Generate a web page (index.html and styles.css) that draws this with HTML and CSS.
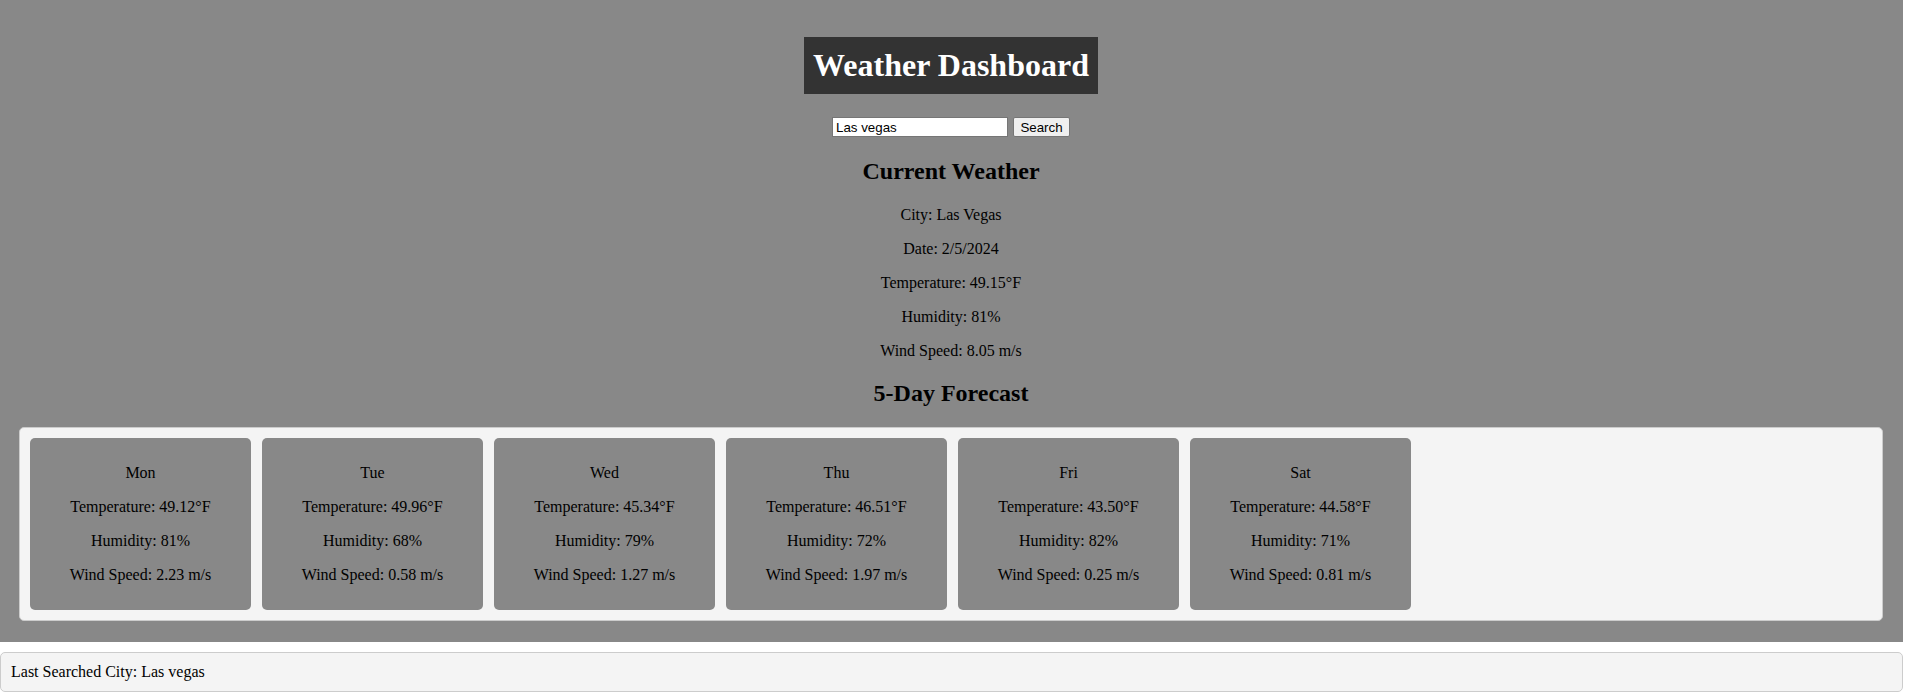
FILE: index.html
```html
<!DOCTYPE html>
<html lang="en">
<head>
<meta charset="UTF-8">
<title>Weather Dashboard</title>
<link rel="stylesheet" href="styles.css">
</head>
<body>
<main class="dashboard">
  <header class="title-wrap">
    <h1 class="title">Weather Dashboard</h1>
  </header>
  <form class="search">
    <input class="search-input" type="text" value="Las vegas">
    <button class="search-btn" type="button">Search</button>
  </form>
  <section class="current">
    <h2 class="section-title">Current Weather</h2>
    <p class="line">City: Las Vegas</p>
    <p class="line">Date: 2/5/2024</p>
    <p class="line">Temperature: 49.15°F</p>
    <p class="line">Humidity: 81%</p>
    <p class="line">Wind Speed: 8.05 m/s</p>
  </section>
  <h2 class="section-title">5-Day Forecast</h2>
  <div class="forecast">
    <div class="card">
      <p class="line">Mon</p>
      <p class="line">Temperature: 49.12°F</p>
      <p class="line">Humidity: 81%</p>
      <p class="line">Wind Speed: 2.23 m/s</p>
    </div>
    <div class="card">
      <p class="line">Tue</p>
      <p class="line">Temperature: 49.96°F</p>
      <p class="line">Humidity: 68%</p>
      <p class="line">Wind Speed: 0.58 m/s</p>
    </div>
    <div class="card">
      <p class="line">Wed</p>
      <p class="line">Temperature: 45.34°F</p>
      <p class="line">Humidity: 79%</p>
      <p class="line">Wind Speed: 1.27 m/s</p>
    </div>
    <div class="card">
      <p class="line">Thu</p>
      <p class="line">Temperature: 46.51°F</p>
      <p class="line">Humidity: 72%</p>
      <p class="line">Wind Speed: 1.97 m/s</p>
    </div>
    <div class="card">
      <p class="line">Fri</p>
      <p class="line">Temperature: 43.50°F</p>
      <p class="line">Humidity: 82%</p>
      <p class="line">Wind Speed: 0.25 m/s</p>
    </div>
    <div class="card">
      <p class="line">Sat</p>
      <p class="line">Temperature: 44.58°F</p>
      <p class="line">Humidity: 71%</p>
      <p class="line">Wind Speed: 0.81 m/s</p>
    </div>
  </div>
</main>
<div class="last-search">Last Searched City: Las vegas</div>
</body>
</html>
```

FILE: styles.css
```css
html, body {
  background: #ffffff;
}
body {
  margin: 0 5px 0 0;
  font-family: "Liberation Serif", "Times New Roman", serif;
  font-size: 16px;
  color: #000;
}
.dashboard {
  background: #888888;
  padding: 37px 20px 21px 19px;
  text-align: center;
}
.title-wrap {
  margin: 0;
}
.title {
  display: inline-block;
  margin: 0;
  padding: 10px 9px;
  background: #333333;
  color: #ffffff;
  font-size: 32px;
  line-height: 37px;
  font-weight: bold;
}
.search {
  display: flex;
  justify-content: center;
  align-items: center;
  gap: 5px;
  margin: 23px 0 0;
}
.search-input {
  box-sizing: border-box;
  width: 176px;
  height: 20px;
  padding: 1px 3px;
  border: 1px solid #767676;
  background: #fff;
  font-family: "Liberation Sans", Arial, sans-serif;
  font-size: 13.33px;
  color: #000;
}
.search-btn {
  box-sizing: border-box;
  width: 57px;
  height: 20px;
  padding: 0 6px;
  border: 1px solid #767676;
  border-radius: 2px;
  background: #efefef;
  font-family: "Liberation Sans", Arial, sans-serif;
  font-size: 13.33px;
  color: #000;
}
.section-title {
  font-size: 24px;
  line-height: 1.15;
  font-weight: bold;
  margin: 20px 0;
}
.current .section-title {
  margin-top: 21px;
}
.line {
  margin: 16px 0;
  line-height: 18px;
}
.forecast {
  display: flex;
  gap: 11px;
  padding: 10px;
  background: #f4f4f4;
  border: 1px solid #cccccc;
  border-radius: 5px;
  text-align: center;
}
.card {
  box-sizing: border-box;
  width: 221px;
  padding: 10px;
  background: #888888;
  border-radius: 5px;
}
.last-search {
  margin-top: 10px;
  padding: 10px;
  line-height: 18px;
  background: #f4f4f4;
  border: 1px solid #cccccc;
  border-radius: 5px;
}
```
